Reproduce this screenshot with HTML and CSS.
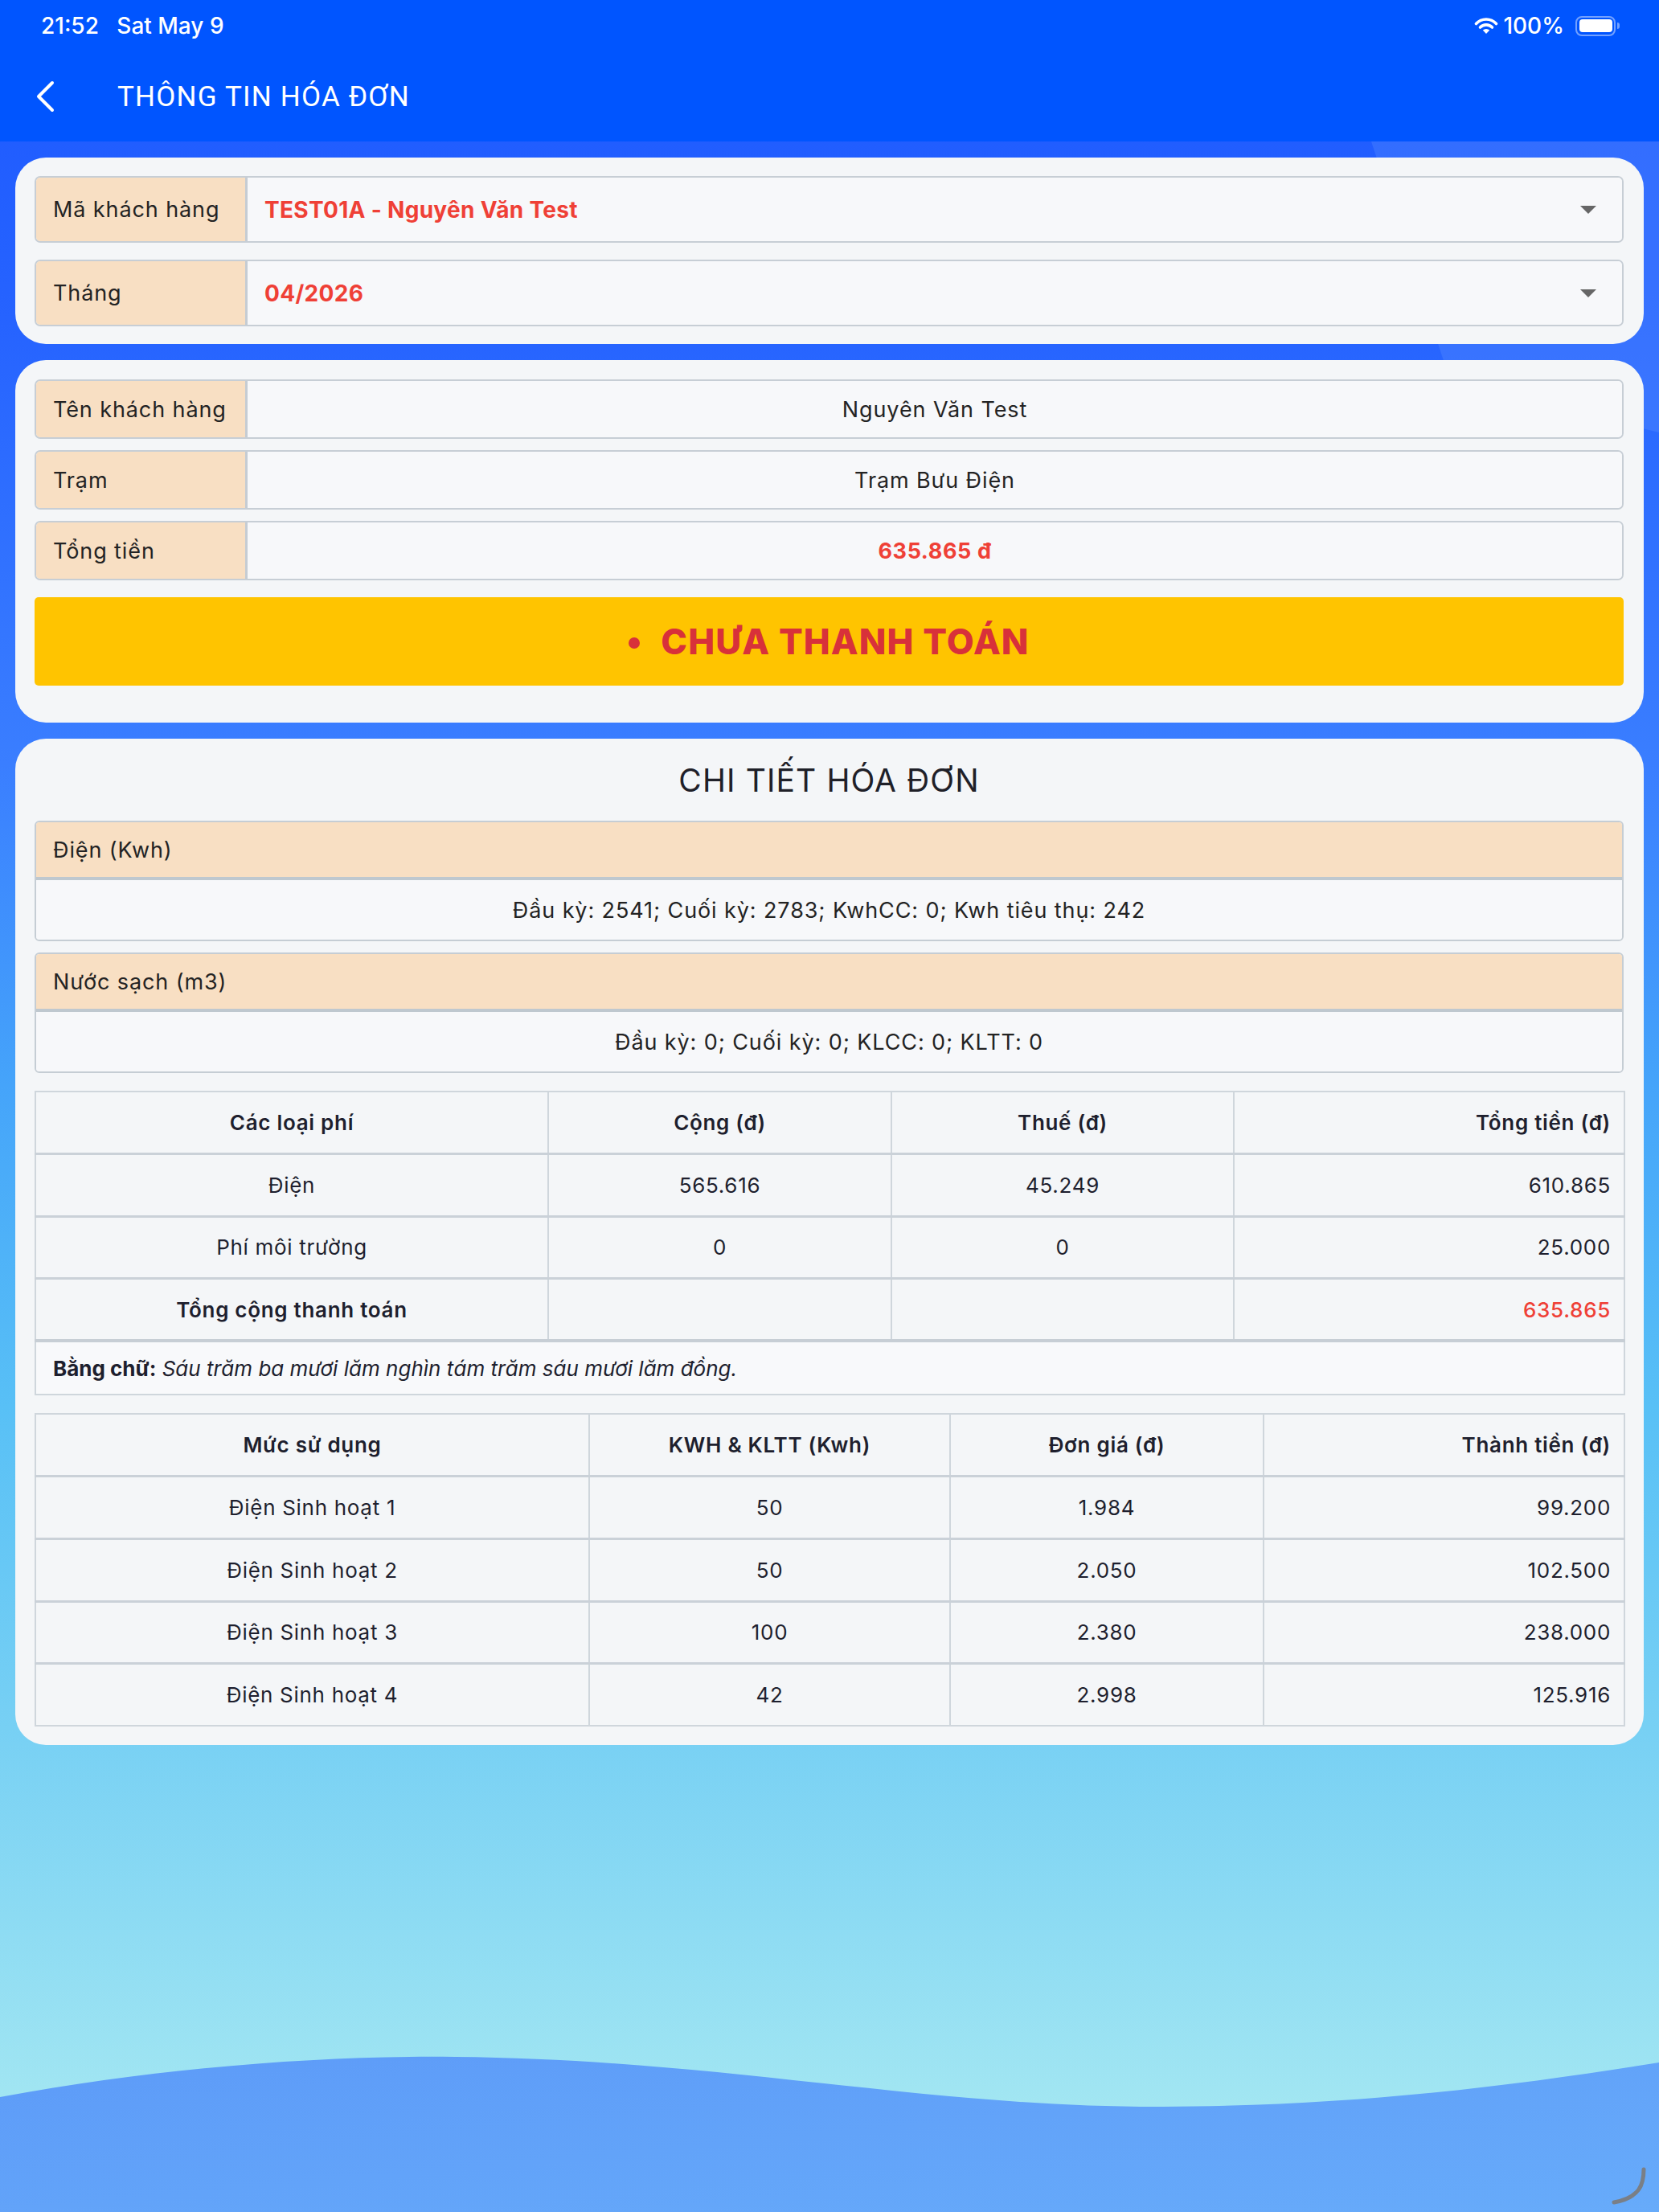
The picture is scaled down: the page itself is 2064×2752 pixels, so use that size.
FILE: index.html
```html
<!DOCTYPE html>
<html lang="vi">
<head>
    <meta charset="UTF-8">
    <meta name="viewport" content="width=device-width, initial-scale=1.0">
    <title>Thông tin hóa đơn</title>
    <link rel="stylesheet" href="styles.css">
</head>
<body>
    <div class="screen">
        <!-- decorative background -->
        <div class="glow"></div>
        <svg class="wave" viewBox="0 0 2064 200" preserveAspectRatio="none">
            <defs>
                <linearGradient id="waveFill" x1="0" y1="0" x2="1" y2="1">
                    <stop offset="0" stop-color="#5d9bf8"/>
                    <stop offset="1" stop-color="#67abfa"/>
                </linearGradient>
            </defs>
            <path d="M0,57 C200,20 400,5 566,7 C900,10 1150,70 1447,69 C1700,68 1900,40 2064,14 L2064,200 L0,200 Z" fill="url(#waveFill)"/>
        </svg>
        <svg class="spinner" viewBox="0 0 48 48">
            <path d="M43,3 C43,22 38,38 6,44" fill="none" stroke="#7a7f86" stroke-width="5" stroke-linecap="round"/>
        </svg>

        <header class="topbar">
            <div class="status">
                <span class="clock">21:52&nbsp;&nbsp;&nbsp;Sat May 9</span>
                <div class="status-right">
                    <svg class="wifi" viewBox="0 0 30 22">
                        <path d="M2.5,8.5 A17,17 0 0 1 27.5,8.5" fill="none" stroke="#fff" stroke-width="3.6" stroke-linecap="round"/>
                        <path d="M7.5,13 A10.5,10.5 0 0 1 22.5,13" fill="none" stroke="#fff" stroke-width="3.6" stroke-linecap="round"/>
                        <path d="M15,21 L10.8,16.6 A6,6 0 0 1 19.2,16.6 Z" fill="#fff"/>
                    </svg>
                    <span>100%</span>
                    <div class="battery"><div class="battery-level"></div></div>
                </div>
            </div>
            <div class="appbar">
                <svg class="back" viewBox="0 0 26 40">
                    <polyline points="21,3 4,20 21,37" fill="none" stroke="#fff" stroke-width="4" stroke-linecap="round" stroke-linejoin="round"/>
                </svg>
                <h1>THÔNG TIN HÓA ĐƠN</h1>
            </div>
        </header>

        <main class="content">
            <section class="card card-filter">
                <div class="field">
                    <div class="field-label">Mã khách hàng</div>
                    <div class="field-value select">
                        <span>TEST01A - Nguyên Văn Test</span>
                        <i class="caret"></i>
                    </div>
                </div>
                <div class="field">
                    <div class="field-label">Tháng</div>
                    <div class="field-value select">
                        <span>04/2026</span>
                        <i class="caret"></i>
                    </div>
                </div>
            </section>

            <section class="card card-summary">
                <div class="field small">
                    <div class="field-label">Tên khách hàng</div>
                    <div class="field-value center">Nguyên Văn Test</div>
                </div>
                <div class="field small">
                    <div class="field-label">Trạm</div>
                    <div class="field-value center">Trạm Bưu Điện</div>
                </div>
                <div class="field small">
                    <div class="field-label">Tổng tiền</div>
                    <div class="field-value center total">635.865 đ</div>
                </div>
                <div class="banner"><span class="dot"></span>CHƯA THANH TOÁN</div>
            </section>

            <section class="card card-detail">
                <h2>CHI TIẾT HÓA ĐƠN</h2>

                <div class="meter">
                    <div class="meter-head">Điện (Kwh)</div>
                    <div class="meter-body">Đầu kỳ: 2541; Cuối kỳ: 2783; KwhCC: 0; Kwh tiêu thụ: 242</div>
                </div>
                <div class="meter">
                    <div class="meter-head">Nước sạch (m3)</div>
                    <div class="meter-body">Đầu kỳ: 0; Cuối kỳ: 0; KLCC: 0; KLTT: 0</div>
                </div>

                <table class="grid fees">
                    <colgroup>
                        <col class="c1"><col class="c2"><col class="c3"><col class="c4">
                    </colgroup>
                    <tr class="head">
                        <th>Các loại phí</th><th>Cộng (đ)</th><th>Thuế (đ)</th><th class="num">Tổng tiền (đ)</th>
                    </tr>
                    <tr>
                        <td>Điện</td><td>565.616</td><td>45.249</td><td class="num">610.865</td>
                    </tr>
                    <tr>
                        <td>Phí môi trường</td><td>0</td><td>0</td><td class="num">25.000</td>
                    </tr>
                    <tr>
                        <th>Tổng cộng thanh toán</th><td></td><td></td><td class="num red">635.865</td>
                    </tr>
                    <tr class="words">
                        <td colspan="4"><b>Bằng chữ:</b> <i>Sáu trăm ba mươi lăm nghìn tám trăm sáu mươi lăm đồng.</i></td>
                    </tr>
                </table>

                <table class="grid usage">
                    <colgroup>
                        <col class="c1"><col class="c2"><col class="c3"><col class="c4">
                    </colgroup>
                    <tr class="head">
                        <th>Mức sử dụng</th><th>KWH &amp; KLTT (Kwh)</th><th>Đơn giá (đ)</th><th class="num">Thành tiền (đ)</th>
                    </tr>
                    <tr>
                        <td>Điện Sinh hoạt 1</td><td>50</td><td>1.984</td><td class="num">99.200</td>
                    </tr>
                    <tr>
                        <td>Điện Sinh hoạt 2</td><td>50</td><td>2.050</td><td class="num">102.500</td>
                    </tr>
                    <tr>
                        <td>Điện Sinh hoạt 3</td><td>100</td><td>2.380</td><td class="num">238.000</td>
                    </tr>
                    <tr>
                        <td>Điện Sinh hoạt 4</td><td>42</td><td>2.998</td><td class="num">125.916</td>
                    </tr>
                </table>
            </section>
        </main>
    </div>
</body>
</html>
```

FILE: styles.css
```css
* {
    margin: 0;
    padding: 0;
    box-sizing: border-box;
}

body {
    font-family: Inter, "Noto Sans", sans-serif;
    color: #1e1f2e;
    background: #a3e7f2;
}

/* Whole screen with the blue -> cyan backdrop */
.screen {
    position: relative;
    width: 2064px;
    min-height: 2752px;
    overflow: hidden;
    background: linear-gradient(180deg,
        #1d59ff 0,
        #2663ff 400px,
        #3a7eff 950px,
        #45a4fa 1350px,
        #58c0f6 1750px,
        #77d0f4 2150px,
        #a2e6f2 2620px);
}

.glow {
    position: absolute;
    top: 176px;
    left: 1640px;
    width: 424px;
    height: 380px;
    background: rgba(120, 170, 255, 0.22);
    clip-path: polygon(66px 0, 424px 0, 424px 362px, 165px 300px);
}

.wave {
    position: absolute;
    left: 0;
    bottom: 0;
    width: 2064px;
    height: 200px;
}

.spinner {
    position: absolute;
    right: 14px;
    bottom: 8px;
    width: 48px;
    height: 48px;
}

/* Top blue bar */
.topbar {
    position: relative;
    background: #0055ff;
    color: #fff;
    height: 176px;
}

.status {
    height: 64px;
    display: flex;
    align-items: center;
    justify-content: space-between;
    padding: 0 48px 0 51px;
    font-size: 28px;
    font-weight: 500;
}

.status-right {
    display: flex;
    align-items: center;
    gap: 10px;
}

.wifi {
    width: 30px;
    height: 22px;
    margin-right: -4px;
}

.battery {
    position: relative;
    width: 50px;
    height: 25px;
    border: 2.5px solid rgba(255, 255, 255, 0.45);
    border-radius: 8px;
    padding: 2.5px;
    margin-left: 4px;
    margin-right: 6px;
}

.battery::after {
    content: "";
    position: absolute;
    right: -7px;
    top: 6px;
    width: 3px;
    height: 8px;
    border-radius: 0 3px 3px 0;
    background: rgba(255, 255, 255, 0.45);
}

.battery-level {
    width: 100%;
    height: 100%;
    background: #fff;
    border-radius: 4px;
}

.appbar {
    height: 112px;
    display: flex;
    align-items: center;
    padding-left: 44px;
}

.back {
    width: 26px;
    height: 40px;
}

.appbar h1 {
    margin-left: 76px;
    font-family: Roboto, Inter, sans-serif;
    font-size: 35px;
    font-weight: 400;
    letter-spacing: 1.2px;
}

/* Cards */
.content {
    position: relative;
    padding: 20px 19px;
    display: flex;
    flex-direction: column;
    gap: 20px;
}

.card {
    background: #f4f6f8;
    border-radius: 38px;
    padding: 23px 25px 22px 24px;
    display: flex;
    flex-direction: column;
}

.card-filter {
    gap: 21px;
}

.card-summary {
    padding-top: 24px;
    padding-bottom: 46px;
    gap: 14px;
}

.field {
    display: flex;
    height: 83px;
    border: 2px solid #c7ced5;
    border-radius: 7px;
    overflow: hidden;
    font-size: 27px;
    letter-spacing: 0.9px;
}

.field.small {
    height: 74px;
}

.field-label {
    width: 263px;
    flex-shrink: 0;
    background: #f8dfc3;
    border-right: 3px solid #c5ccd3;
    display: flex;
    align-items: center;
    padding-left: 21px;
    color: #232323;
}

.field-value {
    flex: 1;
    background: #f7f8fa;
    display: flex;
    align-items: center;
    padding: 0 32px 0 21px;
    color: #232323;
}

.field-value.select {
    justify-content: space-between;
    color: #ef4036;
    font-weight: 700;
    font-size: 28px;
    letter-spacing: 0.3px;
}

.field-value.center {
    justify-content: center;
    padding: 0;
}

.field-value.total {
    color: #ef4036;
    font-weight: 700;
    letter-spacing: 0.6px;
}

.caret {
    width: 0;
    height: 0;
    border-left: 10px solid transparent;
    border-right: 10px solid transparent;
    border-top: 10px solid #666;
}

.banner {
    margin-top: 7px;
    height: 110px;
    background: #ffc400;
    border-radius: 5px;
    display: flex;
    align-items: center;
    justify-content: center;
    color: #d8313a;
    font-size: 44px;
    font-weight: 800;
    letter-spacing: 1.1px;
}

.banner .dot {
    width: 14px;
    height: 14px;
    border-radius: 50%;
    background: #d8313a;
    margin-right: 26px;
    margin-top: 4px;
}

/* Detail card */
.card-detail {
    padding-top: 0;
    padding-bottom: 23px;
}

.card-detail h2 {
    height: 102px;
    display: flex;
    align-items: center;
    justify-content: center;
    font-size: 39px;
    font-weight: 400;
    letter-spacing: 1.1px;
    color: #1f2028;
}

.meter {
    border: 2px solid #c5cdd4;
    border-radius: 6px;
    overflow: hidden;
    font-size: 27px;
    letter-spacing: 0.9px;
    margin-bottom: 14px;
}

.meter + .meter {
    margin-bottom: 22px;
}

.meter-head {
    height: 72px;
    background: #f8dfc3;
    border-bottom: 4px solid #bfc8cf;
    display: flex;
    align-items: center;
    padding-left: 21px;
    color: #232323;
}

.meter-body {
    height: 74px;
    background: #f7f8fa;
    display: flex;
    align-items: center;
    justify-content: center;
    color: #232323;
}

/* Tables */
.grid {
    width: 100%;
    table-layout: fixed;
    border-collapse: collapse;
    border: 2px solid #c5cdd4;
    font-size: 26px;
    letter-spacing: 0.7px;
}

.grid th,
.grid td {
    height: 77.6px;
    border: 2px solid #cfd6dc;
    text-align: center;
    vertical-align: middle;
    padding: 0 16px;
    font-weight: 400;
}

.grid th {
    font-weight: 600;
}

.grid tr + tr td,
.grid tr + tr th {
    border-top: 3px solid #cad1d8;
}

.grid .num {
    text-align: right;
}

.grid .red {
    color: #ef4036;
    font-weight: 500;
}

.grid .words td {
    height: 67px;
    text-align: left;
    padding-left: 21px;
    background: #f8f9fb;
    border-top: 4px solid #c7ced5;
    letter-spacing: 0;
}

.fees .c1 { width: 638px; }
.fees .c2 { width: 427px; }
.fees .c3 { width: 426px; }
.fees .c4 { width: 486px; }

.usage {
    margin-top: 22px;
}

.usage .c1 { width: 689px; }
.usage .c2 { width: 449px; }
.usage .c3 { width: 390px; }
.usage .c4 { width: 449px; }
```
